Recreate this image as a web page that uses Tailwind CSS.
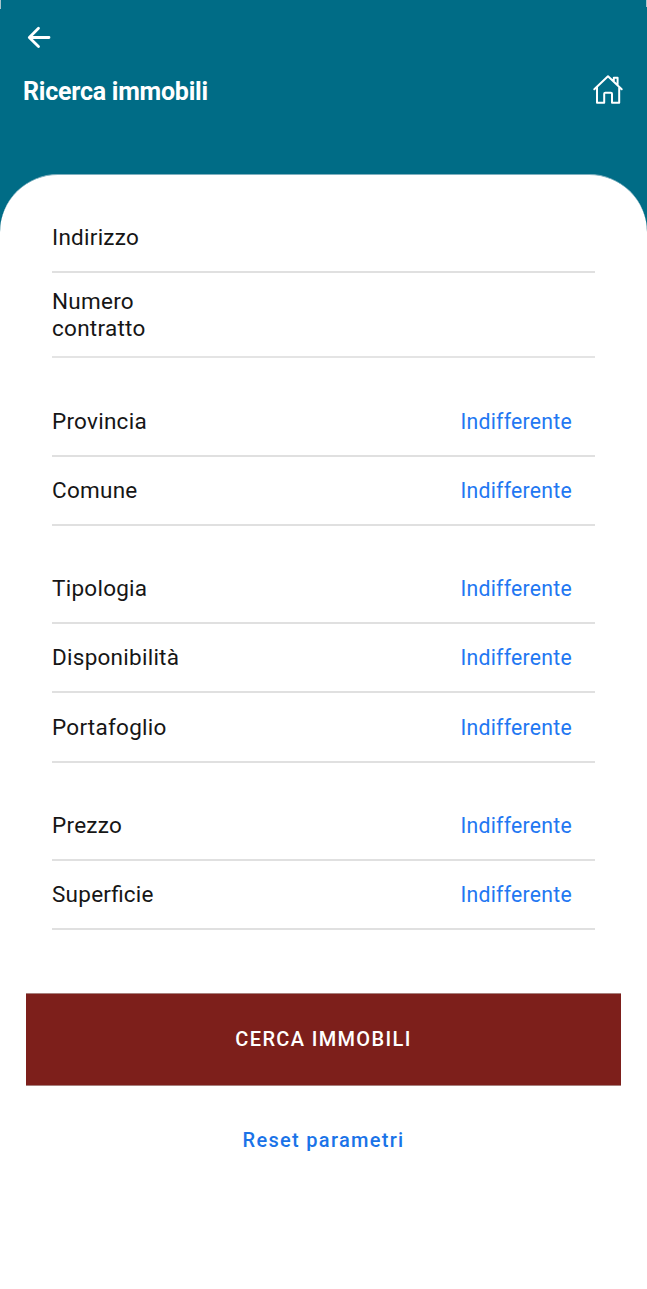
<!DOCTYPE html>
<html lang="it">
<head>
<meta charset="utf-8">
<title>Ricerca immobili</title>
<script src="https://cdn.jsdelivr.net/npm/@tailwindcss/browser@4"></script>
</head>
<body class="w-[647px] h-[1289px] overflow-hidden bg-[#006c86] font-[Roboto,sans-serif]">
<div class="relative flex h-full flex-col">
  <span class="absolute left-0 top-0 h-[9px] w-px bg-[#a9c4cc]"></span>
  <span class="absolute right-0 top-0 h-[7px] w-px bg-[#a9c4cc]"></span>
  <header class="flex h-[174px] shrink-0 flex-col pt-[26px]">
    <svg class="ml-[27px] h-[24px] w-[24px]" viewBox="0 0 24 24" fill="none" stroke="#fff" stroke-width="2.8" stroke-linecap="round" stroke-linejoin="round"><path d="M11.5 2.3L2.3 11.5L11.5 20.5M2.5 11.5H22"/></svg>
    <div class="mt-[24px] flex h-[34px] items-start justify-between px-[23px]">
      <h1 class="pt-px text-[25px] leading-[34px] font-bold text-white tracking-[-0.24px]">Ricerca immobili</h1>
      <svg class="h-[32px] w-[32px]" viewBox="0 0 32 32" fill="none" stroke="#fff" stroke-width="2" stroke-linecap="round" stroke-linejoin="round"><path d="M2.3 15.2L16 2.3L29.7 15.2M5 13V28.7H12.2V19.8Q12.2 18.7 13.3 18.7H18.9Q20 18.7 20 19.8V28.7H27.2V13M21.8 7.3V3.8H25.6V11.3"/></svg>
    </div>
  </header>
  <main class="flex grow flex-col rounded-t-[58px] bg-white border-t border-[#7fb0bf] pt-[28px]">
    <div class="mx-[52px] flex flex-col text-[22.5px] leading-[27.5px] text-[#161616] tracking-[0.26px]">
      <div class="flex h-[70px] items-center border-b-2 border-[#e0e0e0] pt-[2px]"><span>Indirizzo</span></div>
      <div class="flex h-[85px] items-center border-b-2 border-[#e4e4e4] pt-px"><span class="w-[120px]">Numero contratto</span></div>
      <div class="mt-[29px] flex h-[70px] items-center justify-between border-b-2 border-[#e0e0e0] pr-[23px] pt-px"><span>Provincia</span><span class="text-[21.2px] text-[#2277f2]">Indifferente</span></div>
      <div class="flex h-[69px] items-center justify-between border-b-2 border-[#e0e0e0] pr-[23px]"><span>Comune</span><span class="text-[21.2px] text-[#2277f2]">Indifferente</span></div>
      <div class="mt-[29px] flex h-[69px] items-center justify-between border-b-2 border-[#e0e0e0] pr-[23px]"><span>Tipologia</span><span class="text-[21.2px] text-[#2277f2]">Indifferente</span></div>
      <div class="flex h-[69px] items-center justify-between border-b-2 border-[#e0e0e0] pr-[23px]"><span>Disponibilità</span><span class="text-[21.2px] text-[#2277f2]">Indifferente</span></div>
      <div class="flex h-[70px] items-center justify-between border-b-2 border-[#e0e0e0] pr-[23px] pt-px"><span>Portafoglio</span><span class="text-[21.2px] text-[#2277f2]">Indifferente</span></div>
      <div class="mt-[29px] flex h-[69px] items-center justify-between border-b-2 border-[#e0e0e0] pr-[23px]"><span>Prezzo</span><span class="text-[21.2px] text-[#2277f2]">Indifferente</span></div>
      <div class="flex h-[69px] items-center justify-between border-b-2 border-[#e0e0e0] pr-[23px]"><span>Super<span class="tracking-normal">fi</span>cie</span><span class="text-[21.2px] text-[#2277f2]">Indifferente</span></div>
    </div>
    <button class="mx-[26px] mt-[63px] h-[93px] border-y border-[#a87f7c] bg-[#7d1f1b] pb-[2px] text-[20px] font-medium tracking-[1.35px] text-white">CERCA IMMOBILI</button>
    <button class="mt-[39px] h-[30px] self-center text-[20px] font-medium tracking-[1.3px] text-[#1a73e8]">Reset parametri</button>
  </main>
</div>
</body>
</html>
